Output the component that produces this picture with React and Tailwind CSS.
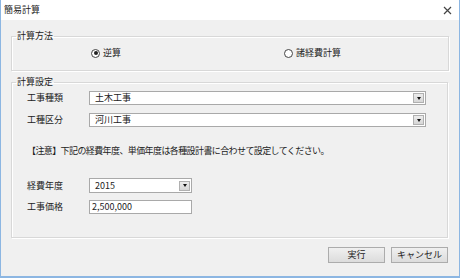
import React from "react";

const font = { fontFamily: '"Noto Sans CJK JP", "Noto Sans", sans-serif' };

function Radio({ checked, label }) {
  return (
    <div className="flex items-center gap-[3px]">
      <div className="w-[9px] h-[9px] rounded-full border border-[#444] bg-white flex items-center justify-center">
        {checked && <div className="w-[4px] h-[4px] rounded-full bg-[#222]" />}
      </div>
      <span className="text-[9px] leading-[12px] text-[#222]">{label}</span>
    </div>
  );
}

function Combo({ value, w }) {
  return (
    <div className={`${w} h-[14px] bg-white border border-[#a9a9a9] flex items-center justify-between pl-[5px] pr-[1px]`}>
      <span className="text-[9px] leading-[12px] text-[#222]">{value}</span>
      <div className="w-[11px] h-[10px] bg-gradient-to-b from-[#ececec] to-[#d6d6d6] border border-[#b0b0b0] flex items-center justify-center">
        <div className="w-0 h-0 border-l-[2.5px] border-r-[2.5px] border-t-[3px] border-l-transparent border-r-transparent border-t-[#111]" />
      </div>
    </div>
  );
}

function Row({ label, children, className }) {
  return (
    <div className={`flex items-center ${className}`}>
      <div className="w-[62px] text-[9px] leading-[12px] text-[#222]">{label}</div>
      {children}
    </div>
  );
}

export default function App() {
  return (
    <div style={font} className="w-[460px] h-[278px] bg-[#f0f0f0] border-l border-r border-b-2 border-[#8cb6e2] flex flex-col overflow-hidden">
      <div className="h-[20px] bg-white flex items-center justify-between pl-[3px] pr-[7px] shrink-0">
        <span className="text-[9px] leading-[12px] text-[#222]">簡易計算</span>
        <svg width="9" height="9" viewBox="0 0 9 9">
          <path d="M1 1 L8 8 M8 1 L1 8" stroke="#444" strokeWidth="1.2" />
        </svg>
      </div>
      <div className="px-[10px] flex flex-col">
        <fieldset className="mt-[10px] border border-[#d8d8d8] shadow-[inset_1px_1px_0_#fff,1px_1px_0_#fff]">
          <legend className="ml-[4px] px-[1px] text-[9px] leading-[12px] text-[#222]">計算方法</legend>
          <div className="flex items-center h-[14px] mt-[4px] mb-[10px] pl-[79px]">
            <div className="w-[193px]">
              <Radio checked label="逆算" />
            </div>
            <Radio label="諸経費計算" />
          </div>
        </fieldset>
        <fieldset className="mt-[5px] mr-[1px] border border-[#d8d8d8] shadow-[inset_1px_1px_0_#fff,1px_1px_0_#fff]">
          <legend className="ml-[4px] px-[1px] text-[9px] leading-[12px] text-[#222]">計算設定</legend>
          <div className="pl-[15px] pr-[21px] pt-[3px] pb-[23px]">
            <Row label="工事種類">
              <Combo value="土木工事" w="flex-1" />
            </Row>
            <Row label="工種区分" className="mt-[8px]">
              <Combo value="河川工事" w="flex-1" />
            </Row>
            <div className="mt-[18px] h-[12px] text-[9px] leading-[12px] text-[#222] tracking-[-0.6px] whitespace-nowrap">
              【注意】下記の経費年度、単価年度は各種設計書に合わせて設定してください。
            </div>
            <Row label="経費年度" className="mt-[21px]">
              <Combo value="2015" w="w-[103px] h-[15px]" />
            </Row>
            <Row label="工事価格" className="mt-[7px]">
              <div className="w-[103px] h-[14px] bg-white border border-[#a9a9a9] flex items-center pl-[2px]">
                <span className="text-[9px] leading-[12px] text-[#222]">2,500,000</span>
              </div>
            </Row>
          </div>
        </fieldset>
        <div className="mt-[9px] flex justify-end gap-[6px] pr-[1px]">
          <button className="w-[57px] h-[16px] border border-[#acacac] bg-gradient-to-b from-[#f0f0f0] to-[#dcdcdc] text-[9px] leading-[12px] text-[#222]">実行</button>
          <button className="w-[57px] h-[16px] border border-[#acacac] bg-gradient-to-b from-[#f0f0f0] to-[#dcdcdc] text-[9px] leading-[12px] text-[#222]">キャンセル</button>
        </div>
      </div>
    </div>
  );
}
